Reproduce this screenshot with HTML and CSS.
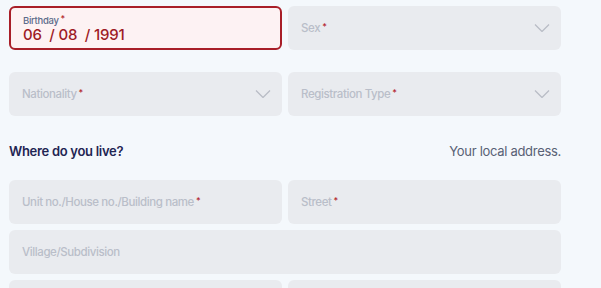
FILE: index.html
```html
<!DOCTYPE html>
<html lang="en">
<head>
    <meta charset="UTF-8">
    <meta name="viewport" content="width=device-width, initial-scale=1.0">
    <title>Personal Details</title>
    <link rel="stylesheet" href="styles.css">
</head>
<body>
    <div class="form">
        <div class="row">
            <div class="field active">
                <span class="label">Birthday<em>*</em></span>
                <span class="value">06 &nbsp;/ 08 &nbsp;/ 1991</span>
            </div>
            <div class="field select">
                <span class="placeholder">Sex<em>*</em></span>
                <svg class="chevron" viewBox="0 0 16 8" width="16" height="8"><path d="M1 0.5 L8 7.5 L15 0.5" /></svg>
            </div>
        </div>
        <div class="row spaced">
            <div class="field select">
                <span class="placeholder">Nationality<em>*</em></span>
                <svg class="chevron" viewBox="0 0 16 8" width="16" height="8"><path d="M1 0.5 L8 7.5 L15 0.5" /></svg>
            </div>
            <div class="field select">
                <span class="placeholder">Registration Type<em>*</em></span>
                <svg class="chevron" viewBox="0 0 16 8" width="16" height="8"><path d="M1 0.5 L8 7.5 L15 0.5" /></svg>
            </div>
        </div>
        <div class="section">
            <h2>Where do you live?</h2>
            <p>Your local address.</p>
        </div>
        <div class="row">
            <div class="field">
                <span class="placeholder">Unit no./House no./Building name<em>*</em></span>
            </div>
            <div class="field">
                <span class="placeholder">Street<em>*</em></span>
            </div>
        </div>
        <div class="row single">
            <div class="field">
                <span class="placeholder">Village/Subdivision</span>
            </div>
        </div>
        <div class="row">
            <div class="field"></div>
            <div class="field"></div>
        </div>
    </div>
</body>
</html>
```

FILE: styles.css
```css
body {
    margin: 0;
    background-color: #f4f8fc;
    font-family: Inter, "Noto Sans", sans-serif;
}
.form {
    width: 552px;
    padding: 6px 9px;
    display: flex;
    flex-direction: column;
    gap: 6px;
}
.row {
    display: grid;
    grid-template-columns: 1fr 1fr;
    gap: 6px;
}
.row.spaced {
    margin-top: 16px;
}
.row.single {
    grid-template-columns: 1fr;
}
.field {
    height: 44px;
    box-sizing: border-box;
    background-color: #e9ebef;
    border-radius: 6px;
    padding: 0 11px 0 13px;
    display: flex;
    align-items: center;
    justify-content: space-between;
}
.field.active {
    background-color: #fdf2f3;
    border: 2px solid #a81e28;
    padding: 0 11px 0 12px;
    flex-direction: column;
    align-items: flex-start;
    justify-content: center;
    gap: 0;
}
.label {
    font-size: 9.5px;
    font-weight: 500;
    color: #5c6b8a;
    letter-spacing: -0.3px;
}
.value {
    font-size: 15px;
    font-weight: 500;
    color: #9d1b25;
    line-height: 17px;
    letter-spacing: -0.2px;
}
.placeholder {
    font-size: 11.5px;
    font-weight: 500;
    color: #b9bec9;
    letter-spacing: -0.4px;
}
em {
    font-style: normal;
    color: #b3262e;
    font-size: 9px;
    vertical-align: 2px;
    margin-left: 2px;
}
.chevron {
    fill: none;
    stroke: #b9bdc6;
    stroke-width: 1.3;
}
.section {
    height: 46px;
    margin-top: 6px;
    display: flex;
    justify-content: space-between;
    align-items: center;
}
.section h2 {
    margin: 0;
    font-size: 13px;
    font-weight: 600;
    color: #1f2553;
    letter-spacing: -0.3px;
}
.section p {
    margin: 0;
    font-size: 13px;
    color: #586175;
    letter-spacing: -0.3px;
}
```
